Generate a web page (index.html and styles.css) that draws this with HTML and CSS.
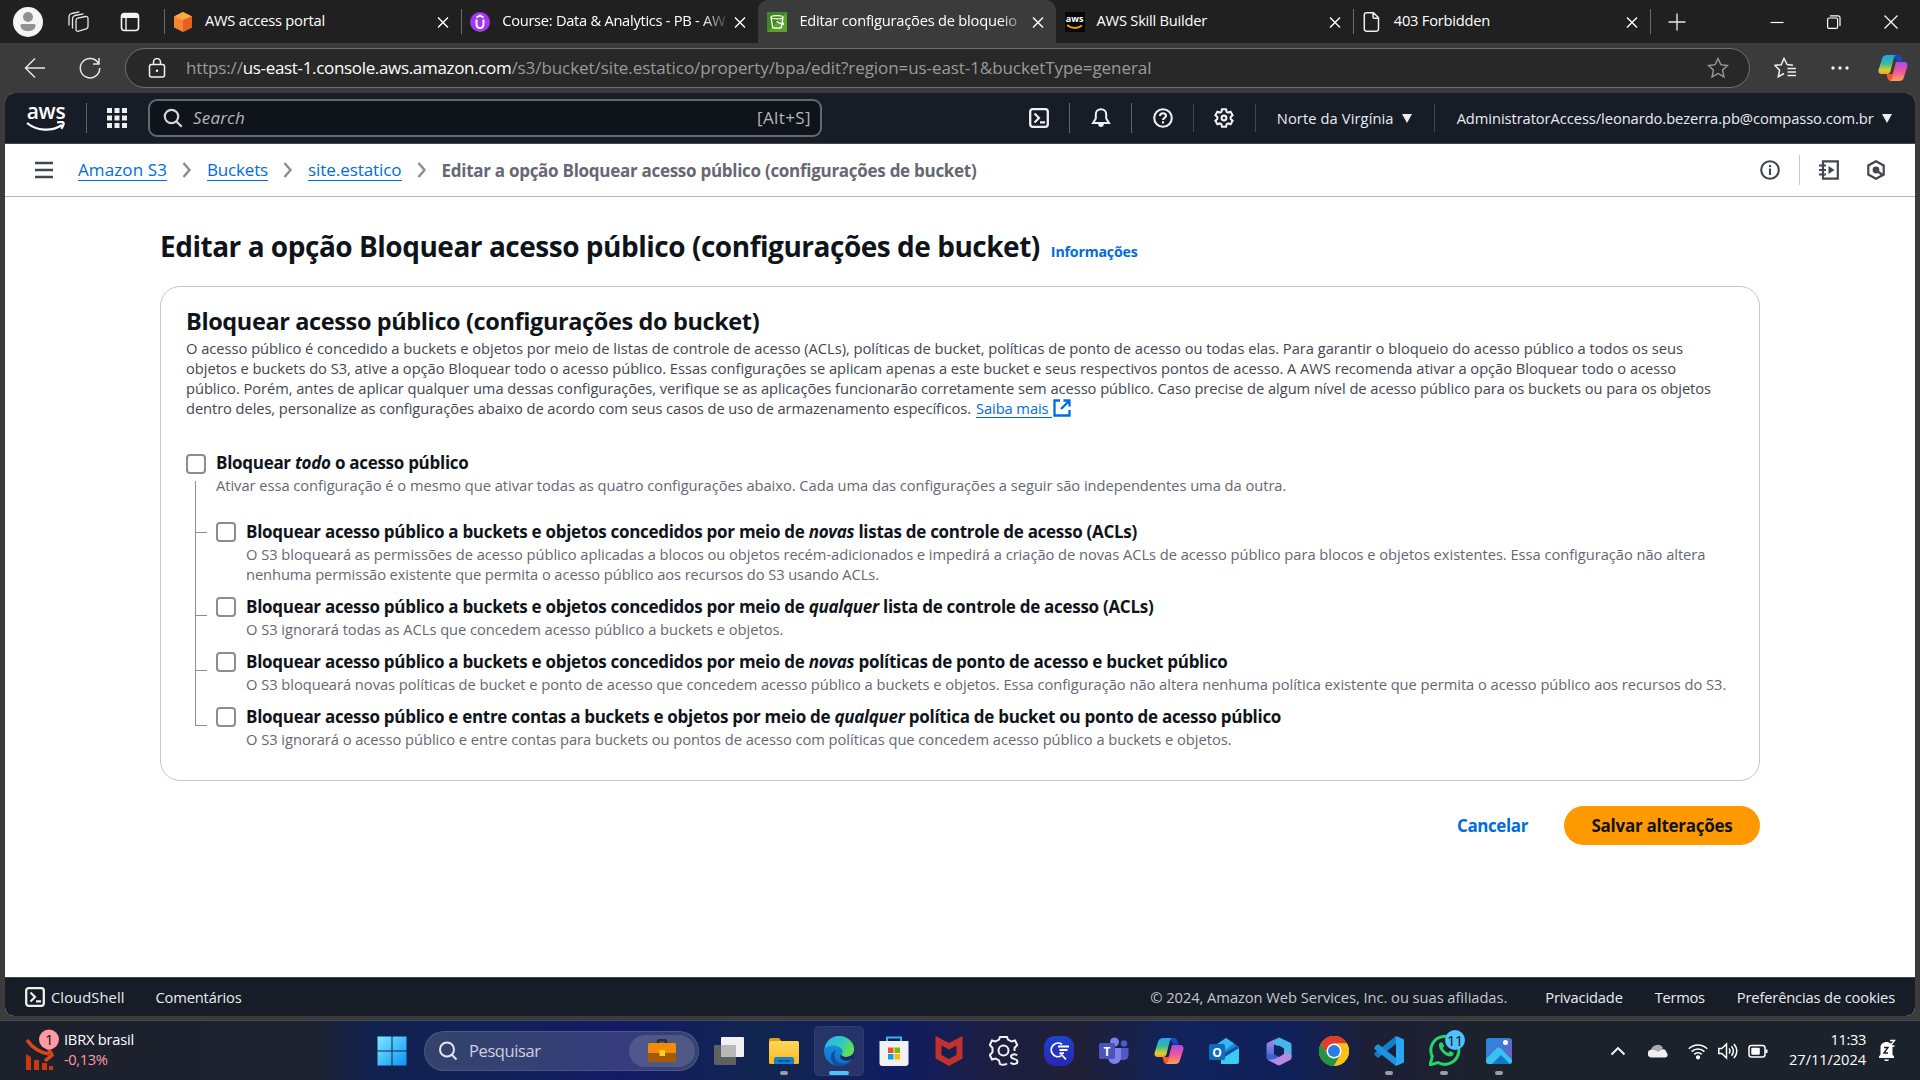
FILE: index.html
```html
<!DOCTYPE html>
<html lang="pt-BR">
<head>
<meta charset="utf-8">
<title>Editar configurações de bloqueio</title>
<link rel="stylesheet" href="styles.css">
</head>
<body>
<svg class="defs" aria-hidden="true">
  <defs>
    <linearGradient id="cpA" x1="0" y1="0" x2="0" y2="1"><stop offset="0" stop-color="#1fa4ee"/><stop offset=".45" stop-color="#3cba9c"/><stop offset=".8" stop-color="#d7d02a"/><stop offset="1" stop-color="#f3a51c"/></linearGradient>
    <linearGradient id="cpB" x1="0" y1="0" x2="0" y2="1"><stop offset="0" stop-color="#a64df0"/><stop offset=".5" stop-color="#f0559a"/><stop offset="1" stop-color="#fba35a"/></linearGradient>
    <linearGradient id="edA" x1="0" y1="0" x2="1" y2=".4"><stop offset="0" stop-color="#28b6ea"/><stop offset=".6" stop-color="#2fc8c0"/><stop offset="1" stop-color="#63e04e"/></linearGradient>
    <linearGradient id="edB" x1="0" y1="0" x2="0" y2="1"><stop offset="0" stop-color="#1b9ae0"/><stop offset="1" stop-color="#0d6fc4"/></linearGradient>
    <linearGradient id="wn" x1="0" y1="0" x2="1" y2="1"><stop offset="0" stop-color="#7deaff"/><stop offset="1" stop-color="#0a93f7"/></linearGradient>
    <linearGradient id="fd" x1="0" y1="0" x2="0" y2="1"><stop offset="0" stop-color="#ffd75e"/><stop offset="1" stop-color="#fcb91c"/></linearGradient>
    <linearGradient id="qb" x1="0" y1="0" x2="0" y2="1"><stop offset="0" stop-color="#1b44cf"/><stop offset="1" stop-color="#2b25b3"/></linearGradient>
    <linearGradient id="ph" x1="0" y1="0" x2="1" y2="1"><stop offset="0" stop-color="#1c8fe0"/><stop offset="1" stop-color="#7a57c0"/></linearGradient>
    <linearGradient id="mA" x1="0" y1="0" x2="0" y2="1"><stop offset="0" stop-color="#b98ae6"/><stop offset="1" stop-color="#3f6fd8"/></linearGradient>
    <symbol id="copilot" viewBox="0 0 30 30">
      <path d="M15 2h5c2 0 3 1 3.500 3l1 3.500h-5z" fill="#1648c8"/>
      <path d="M9 2h9c-1.500 1-2 2-2.500 4l-3 12c-.5 2-1.500 3-3.500 3H4c-3 0-4-2-3.200-5L4 6c.8-3 2.500-4 5-4z" fill="url(#cpA)"/>
      <path d="M8.500 21h5.500l1-1 3-11 3 0-3.500 14c-1 3.500-2 5-4.500 5-2 0-3-1-3.500-3z" fill="#f4562e"/>
      <path d="M21 28h-9c1.500-1 2-2 2.500-4l3-12c.5-2 1.500-3 3.500-3h5c3 0 4 2 3.200 5L26 24c-.8 3-2.500 4-5 4z" fill="url(#cpB)"/>
    </symbol>
    <symbol id="x" viewBox="0 0 20 20"><path d="M5 5.500l10 10M15 5.500l-10 10" stroke="#fff" stroke-width="1.400" fill="none"/></symbol>
    <symbol id="shell" viewBox="0 0 20 20"><rect x="1.200" y="1.200" width="17.600" height="17.600" rx="2.500" fill="none" stroke="#f0f0f2" stroke-width="2.300"/><path d="M5.500 5.500l4.500 4.500-4.500 4.500M11 14.300h5" fill="none" stroke="#f0f0f2" stroke-width="2.200"/></symbol>
    <symbol id="chev" viewBox="0 0 10 18"><path d="M1.500 2l6 7-6 7" fill="none" stroke="#8c8c94" stroke-width="2.400"/></symbol>
  </defs>
</svg>

<header class="tabbar">
  <div class="tabtools">
    <svg class="i30" viewBox="0 0 30 30"><circle cx="15" cy="15" r="15" fill="#f5f5f5"/><circle cx="15" cy="10" r="5" fill="#919191"/><path d="M7.500 18.500c0-1 .5-1.500 1.500-1.500h12c1 0 1.500.5 1.500 1.500 0 3.500-3 5.500-7.500 5.500s-7.500-2-7.500-5.500z" fill="#919191"/></svg>
    <svg class="i22" viewBox="0 0 22 22" fill="none" stroke="#e8e8e8" stroke-width="1.300"><path d="M9 9.500c0-1.300.6-2 1.800-2.300l7.700-1.700c1.500-.3 2.500.4 2.500 2v8c0 1.300-.6 2-1.800 2.400l-7.700 2.300c-1.500.4-2.500-.4-2.500-1.900zM5.500 17.500V8c0-2 .8-3 2.500-3.500L16.500 2.800M2 14.500V6c0-2 .8-3 2.500-3.500L12.500.8"/></svg>
    <svg class="i20" viewBox="0 0 20 20"><rect x="1.500" y="1.500" width="17" height="17" rx="3" fill="none" stroke="#f5f5f5" stroke-width="1.600"/><path d="M1.500 6V4a2.500 2.500 0 0 1 2.500-2.500h12A2.500 2.500 0 0 1 18.500 4v2z" fill="#f5f5f5"/><path d="M6 6v12" stroke="#f5f5f5" stroke-width="1.400"/></svg>
  </div>
  <nav class="tabs">
    <div class="tab">
      <svg class="i20" viewBox="0 0 20 20"><path d="M10 0l9 4.500v11L10 20l-9-4.500v-11z" fill="#f58536"/><path d="M10 0l9 4.500L10 8 1 4.500z" fill="#fbaa3c"/><path d="M10 8l9-3.500v11L10 20z" fill="#e8601c"/></svg>
      <span class="tab-title">AWS access portal</span><svg class="i20"><use href="#x"/></svg>
    </div>
    <div class="tab">
      <svg class="i20" viewBox="0 0 20 20"><circle cx="10" cy="10" r="10" fill="#a435f0"/><path d="M6.500 5.500L10 3.500l3.500 2M6.500 7.500v4.500c0 2.500 1.300 4 3.500 4s3.500-1.500 3.500-4V7.500" fill="none" stroke="#fff" stroke-width="2"/></svg>
      <span class="tab-title fade tight">Course: Data &amp; Analytics - PB - AW</span><svg class="i20"><use href="#x"/></svg>
    </div>
    <div class="tab active">
      <svg class="i20" viewBox="0 0 20 20"><rect width="20" height="20" fill="#3f8624"/><path d="M0 20L20 0v20z" fill="#5aa22c"/><path d="M4 5.500l1.700 10c.2.700 8.400.7 8.600 0L16 5.500M9.500 9.500l5.500 2.800c2 .5 2-.8.3-2" fill="none" stroke="#fff" stroke-width="1.300"/><ellipse cx="10" cy="5.300" rx="6" ry="1.600" fill="none" stroke="#fff" stroke-width="1.200"/></svg>
      <span class="tab-title fade">Editar configurações de bloqueio</span><svg class="i20"><use href="#x"/></svg>
    </div>
    <div class="tab nosep">
      <span class="awsfav"><b>aws</b><svg viewBox="0 0 16 5"><path d="M0 1c4 3.500 10 4 15 .5" fill="none" stroke="#f90" stroke-width="2"/></svg></span>
      <span class="tab-title">AWS Skill Builder</span><svg class="i20"><use href="#x"/></svg>
    </div>
    <div class="tab">
      <svg class="i20" viewBox="0 0 20 20" fill="none" stroke="#eee" stroke-width="1.500"><path d="M4.500.8h7l5 5V17a2.200 2.200 0 0 1-2.200 2.200H4.500A2.200 2.200 0 0 1 2.300 17V3A2.200 2.200 0 0 1 4.500.8M11 .8v4a1.500 1.500 0 0 0 1.500 1.500h4"/></svg>
      <span class="tab-title">403 Forbidden</span><svg class="i20"><use href="#x"/></svg>
    </div>
  </nav>
  <div class="newtab"><svg class="i20" viewBox="0 0 20 20"><path d="M10 1.500v17M1.500 10h17" stroke="#e6e6e6" stroke-width="1.400"/></svg></div>
  <div class="wincontrols">
    <svg class="i16" viewBox="0 0 16 16"><path d="M1.500 8.500h13" stroke="#fff" stroke-width="1.200"/></svg>
    <svg class="i16" viewBox="0 0 16 16" fill="none" stroke="#fff" stroke-width="1.200"><rect x="1.600" y="4" width="10" height="10.400" rx="1.500"/><path d="M4 1.800h8a2 2 0 0 1 2 2V12"/></svg>
    <svg class="i16" viewBox="0 0 16 16"><path d="M1.500 1.500l13 13M14.500 1.500l-13 13" stroke="#fff" stroke-width="1.200"/></svg>
  </div>
</header>

<div class="toolbar">
  <svg class="i24" viewBox="0 0 24 24"><path d="M22 12H3M12 2.500L2.500 12l9.500 9.500" fill="none" stroke="#e6e6e6" stroke-width="1.500"/></svg>
  <svg class="i24" viewBox="0 0 24 24"><path d="M20.500 7.500A9.700 9.700 0 1 0 21.700 12M21 2v6h-6" fill="none" stroke="#e6e6e6" stroke-width="1.500"/></svg>
  <div class="url">
    <svg class="i20" viewBox="0 0 20 20" fill="none" stroke="#f0f0f0" stroke-width="1.500"><rect x="2.500" y="6.500" width="15" height="12.500" rx="2"/><path d="M6.500 6.500V4a3.500 3.500 0 0 1 7 0v2.500"/><circle cx="10" cy="12.700" r="1.200" fill="#fff" stroke="none"/></svg>
    <span class="url-text"><span class="scheme">https://</span><b>us-east-1.console.aws.amazon.com</b><span class="path">/s3/bucket/site.estatico/property/bpa/edit?region=us-east-1&amp;bucketType=general</span></span>
    <svg class="i22" viewBox="0 0 22 22"><path d="M11 1.500l2.900 6.200 6.600.8-4.900 4.600 1.300 6.700L11 16.500l-5.900 3.300 1.300-6.700L1.500 8.500l6.600-.8z" fill="none" stroke="#9b9b9b" stroke-width="1.400"/></svg>
  </div>
  <div class="tb-right">
    <svg class="i22" viewBox="0 0 22 22" fill="none" stroke="#f0f0f0" stroke-width="1.500"><path d="M19 8.300l-5.800-.8L10 1.500 7.200 7.700l-6.200.8 4.600 4.600-1.300 6.700L10 16.500M13.500 11.500H22M13.500 15H22M13.500 18.500H22"/></svg>
    <svg class="i22" viewBox="0 0 22 22" fill="#f0f0f0"><circle cx="4" cy="11" r="1.700"/><circle cx="11" cy="11" r="1.700"/><circle cx="18" cy="11" r="1.700"/></svg>
    <svg class="i30"><use href="#copilot"/></svg>
  </div>
</div>

<div class="viewport">
  <header class="awsnav">
    <div class="logo"><span>aws</span><svg viewBox="0 0 40 12"><path d="M1 2c10 8 24 9 35 2M31 1.500c3-.7 6-.5 6.500.3s-.3 3.700-2.300 6" fill="none" stroke="#fff" stroke-width="2.200"/></svg></div>
    <i class="vsep tall"></i>
    <svg class="i20 apps" viewBox="0 0 20 20" fill="#f0f0f2"><path d="M0 0h5v5H0zM7.500 0h5v5h-5zM15 0h5v5h-5zM0 7.500h5v5H0zM7.500 7.500h5v5h-5zM15 7.500h5v5h-5zM0 15h5v5H0zM7.500 15h5v5h-5zM15 15h5v5h-5z"/></svg>
    <div class="search">
      <svg class="i20" viewBox="0 0 20 20" fill="none" stroke="#d5d5da" stroke-width="2.200"><circle cx="8.500" cy="8.500" r="6.700"/><path d="M13.200 13.200l5.500 5.500"/></svg>
      <i class="ph">Search</i><span class="kbd">[Alt+S]</span>
    </div>
    <div class="navicons">
      <svg class="i20"><use href="#shell"/></svg><i class="vsep tall"></i>
      <svg class="i20" viewBox="0 0 20 20" fill="none" stroke="#f0f0f2" stroke-width="2"><path d="M10 1.200c-3.300 0-5.200 2.300-5.200 5.200v4L2 15h16l-2.800-4.600v-4c0-2.900-1.900-5.200-5.200-5.200z"/><path d="M7 16c.3 2 1.400 3 3 3s2.700-1 3-3z" fill="#f0f0f2" stroke="none"/></svg><i class="vsep tall"></i>
      <svg class="i20" viewBox="0 0 20 20" fill="none" stroke="#f0f0f2" stroke-width="2.100"><circle cx="10" cy="10" r="8.800"/><path d="M7 8c0-1.800 1.300-2.800 3-2.800s3 1 3 2.600c0 2-3 2-3 4.200M10 13.300v2.200"/></svg><i class="vsep"></i>
      <svg class="i20" viewBox="0 0 20 20" fill="none" stroke="#f0f0f2" stroke-width="2.100"><path d="M8 1.200h4l.6 2.600 1.500.8 2.500-.8 2 3.400-1.900 1.800v2l1.900 1.800-2 3.400-2.500-.8-1.500.8-.6 2.600H8l-.6-2.600-1.500-.8-2.500.8-2-3.400L3.300 11V9L1.400 7.200l2-3.400 2.500.8 1.500-.8z"/><circle cx="10" cy="10" r="2.400"/></svg><i class="vsep"></i>
    </div>
    <span class="region"><span>Norte da Virgínia</span><i class="caret"></i></span>
    <i class="vsep"></i>
    <span class="account"><span>AdministratorAccess/leonardo.bezerra.pb@compasso.com.br</span><i class="caret"></i></span>
  </header>

  <div class="crumbbar">
    <svg class="i18" viewBox="0 0 18 18"><path d="M0 2h18M0 9h18M0 16h18" stroke="#424650" stroke-width="2.300"/></svg>
    <nav class="crumbs">
      <a class="c1">Amazon S3</a><svg><use href="#chev"/></svg>
      <a class="c2">Buckets</a><svg><use href="#chev"/></svg>
      <a class="c3">site.estatico</a><svg><use href="#chev"/></svg>
      <b>Editar a opção Bloquear acesso público (configurações de bucket)</b>
    </nav>
    <div class="crumbicons">
      <svg class="i20" viewBox="0 0 20 20" fill="none" stroke="#424650" stroke-width="2.100"><circle cx="10" cy="10" r="8.800"/><path d="M10 8.500V15M10 5v2.200"/></svg>
      <i class="lsep"></i>
      <svg class="i20 book" viewBox="0 0 20 20" fill="none" stroke="#424650" stroke-width="2.200"><path d="M4 1.300h14.800v17.400H4z"/><path d="M0 5.500h7M0 10h7M0 14.500h7"/><path d="M9.500 6l6 4-6 4z" fill="#424650" stroke="none"/></svg>
      <svg class="i20" viewBox="0 0 20 20" fill="none" stroke="#424650" stroke-width="2.200"><path d="M10 1.200l7.700 4.300v9L10 18.800l-7.700-4.300v-9z"/><circle cx="10" cy="10" r="3.400" fill="#424650" stroke="none"/><path d="M11 11l6.500 4.500"/></svg>
    </div>
  </div>

  <main class="content">
    <h1><span>Editar a opção Bloquear acesso público (configurações de bucket)</span><a class="info">Informações</a></h1>
    <section class="card">
      <h2>Bloquear acesso público (configurações do bucket)</h2>
      <div class="desc">
        <div>O acesso público é concedido a buckets e objetos por meio de listas de controle de acesso (ACLs), políticas de bucket, políticas de ponto de acesso ou todas elas. Para garantir o bloqueio do acesso público a todos os seus</div>
        <div>objetos e buckets do S3, ative a opção Bloquear todo o acesso público. Essas configurações se aplicam apenas a este bucket e seus respectivos pontos de acesso. A AWS recomenda ativar a opção Bloquear todo o acesso</div>
        <div>público. Porém, antes de aplicar qualquer uma dessas configurações, verifique se as aplicações funcionarão corretamente sem acesso público. Caso precise de algum nível de acesso público para os buckets ou para os objetos</div>
        <div><span>dentro deles, personalize as configurações abaixo de acordo com seus casos de uso de armazenamento específicos.</span><a class="more">Saiba mais </a><svg class="ext" viewBox="0 0 18 18" fill="none" stroke="#006ce0" stroke-width="2.300"><path d="M7 1.500H1.500v15h15V11M10.500 1.500h6v6M16.500 1.500L8 10"/></svg></div>
      </div>
      <div class="opt root">
        <span class="box"></span>
        <div><div class="ot">Bloquear <em>todo</em> o acesso público</div>
        <div class="od">Ativar essa configuração é o mesmo que ativar todas as quatro configurações abaixo. Cada uma das configurações a seguir são independentes uma da outra.</div></div>
      </div>
      <div class="tree">
        <div class="opt first"><span class="box"></span><div><div class="ot">Bloquear acesso público a buckets e objetos concedidos por meio de <em>novas</em> listas de controle de acesso (ACLs)</div>
          <div class="od">O S3 bloqueará as permissões de acesso público aplicadas a blocos ou objetos recém-adicionados e impedirá a criação de novas ACLs de acesso público para blocos e objetos existentes. Essa configuração não altera</div><div class="od narrow">nenhuma permissão existente que permita o acesso público aos recursos do S3 usando ACLs.</div></div></div>
        <div class="opt"><span class="box"></span><div><div class="ot">Bloquear acesso público a buckets e objetos concedidos por meio de <em>qualquer</em> lista de controle de acesso (ACLs)</div>
          <div class="od">O S3 ignorará todas as ACLs que concedem acesso público a buckets e objetos.</div></div></div>
        <div class="opt"><span class="box"></span><div><div class="ot">Bloquear acesso público a buckets e objetos concedidos por meio de <em>novas</em> políticas de ponto de acesso e bucket público</div>
          <div class="od">O S3 bloqueará novas políticas de bucket e ponto de acesso que concedem acesso público a buckets e objetos. Essa configuração não altera nenhuma política existente que permita o acesso público aos recursos do S3.</div></div></div>
        <div class="opt"><span class="box"></span><div><div class="ot">Bloquear acesso público e entre contas a buckets e objetos por meio de <em>qualquer</em> política de bucket ou ponto de acesso público</div>
          <div class="od">O S3 ignorará o acesso público e entre contas para buckets ou pontos de acesso com políticas que concedem acesso público a buckets e objetos.</div></div></div>
      </div>
    </section>
    <div class="actions"><a>Cancelar</a><button>Salvar alterações</button></div>
  </main>

  <footer class="awsfoot">
    <svg class="i20"><use href="#shell"/></svg><span class="f1">CloudShell</span><span class="f2">Comentários</span>
    <span class="copy">© 2024, Amazon Web Services, Inc. ou suas afiliadas.</span><span class="f3">Privacidade</span><span class="f4">Termos</span><span class="f5">Preferências de cookies</span>
  </footer>
</div>

<footer class="taskbar">
  <div class="widget">
    <svg class="wicon" viewBox="0 0 34 44"><g fill="#c8390f"><path d="M1 27l5 3v13H1zM9 33h5v10H9zM17 36h5v7h-5zM24 39h4v4h-4z"/></g><path d="M2 13c4 6 10 12 22 14M20 34l7-6-4-7" fill="none" stroke="#d8481c" stroke-width="3.500"/><circle cx="24" cy="12.500" r="10" fill="#ff99a4"/><text x="24" y="18" text-anchor="middle" class="badge">1</text></svg>
    <div class="wtext"><span class="idx">IBRX brasil</span><span class="neg">-0,13%</span></div>
  </div>
  <div class="apps-row">
    <span class="app"><svg viewBox="0 0 30 30"><path d="M0.500 0.500h14v14h-14zM15.500.5h14v14h-14zM.5 15.500h14v14h-14zM15.500 15.500h14v14h-14z" fill="url(#wn)"/></svg></span>
    <div class="wsearch">
      <svg class="i20" viewBox="0 0 20 20" fill="none" stroke="#e4e6ee" stroke-width="2"><circle cx="9" cy="8.500" r="7"/><path d="M13.500 13.500l5 5"/></svg>
      <span>Pesquisar</span>
      <div class="brief"><svg viewBox="0 0 28 24"><path d="M10 4V2.500C10 1 11 1 14 1s4 0 4 1.500V4" fill="none" stroke="#2c2c30" stroke-width="2.500"/><rect y="4" width="28" height="19" rx="1.500" fill="#a55a07"/><path d="M0 5.500A1.500 1.500 0 0 1 1.500 4h25A1.500 1.500 0 0 1 28 5.500V14H0z" fill="#f08c08"/><rect x="11.500" y="11" width="5.500" height="6" fill="#ffd21c"/></svg></div>
    </div>
    <span class="app"><svg viewBox="0 0 30 30"><rect y="9" width="22" height="20" rx="1" fill="#5f6062"/><rect x="7" y="1" width="23" height="20" rx="1" fill="#f0f0f0"/><rect x="7" y="9" width="15" height="12" fill="#b8b8b8"/></svg></span>
    <span class="app run"><svg viewBox="0 0 30 30"><path d="M0 4a2 2 0 0 1 2-2h8l3 4H0z" fill="#e09b10"/><rect y="5" width="30" height="23" rx="1.500" fill="url(#fd)"/><path d="M5 28v-5a2 2 0 0 1 2-2h16a2 2 0 0 1 2 2v5z" fill="#1380d0"/><path d="M9 25h12" stroke="#0a4f94" stroke-width="1.500"/></svg></span>
    <span class="app cur"><svg viewBox="0 0 30 30"><circle cx="15" cy="15" r="15" fill="url(#edB)"/><path d="M1 12C2 5 8 0 15 0c8.500 0 15 6 15 13 0 5-3.500 8-8 8-3.500 0-5-1.500-4.500-3 1.500-1.500 1.500-3 .5-4.500C15 9 6 8 1 12z" fill="url(#edA)"/><path d="M12 14c-3 4-2 11 4 13 4 1.300 8 .5 11-2-3 3.500-7 5-12 5-6-1-9-6-8-10.500.5-2.500 2.500-5 5-5.500z" fill="#10509c"/><path d="M17.500 18c-.5 1.700 1 3 4.500 3 4 0 7.500-2.500 8.500-6l0 8-3.500.5c-3 1.500-6 1.500-8 .5-3-1.500-3.500-4-1.500-6z" fill="#1d2a62"/></svg></span>
    <span class="app"><svg viewBox="0 0 30 30"><path d="M8 6V1.500h14V6" fill="none" stroke="#35b4f0" stroke-width="2"/><path d="M.5 5h29v22a3 3 0 0 1-3 3h-23a3 3 0 0 1-3-3z" fill="#f2f2f4"/><path d="M9 11.500h5.500V17H9z" fill="#f25022"/><path d="M15.500 11.500H21V17h-5.500z" fill="#7fba00"/><path d="M9 18h5.500v5.500H9z" fill="#00a4ef"/><path d="M15.500 18H21v5.500h-5.500z" fill="#ffb900"/></svg></span>
    <span class="app"><svg viewBox="0 0 30 30"><path d="M1.500 0L15 7 28.500 0v22.500L15 30 1.500 22.500zM7.500 9.500V19l7.500 4 7.500-4V9.500L15 13.500z" fill="#c4302e" fill-rule="evenodd"/></svg></span>
    <span class="app"><svg viewBox="0 0 30 30" fill="none" stroke="#f2f2f4" stroke-width="2"><path d="M18 27.500c-1.500 1.500-5.500 1.500-7 .5l-1-3.500-3.500-2-3.500 1-2.200-4.500 2.700-3v-4L.8 9 3 4.500l3.500 1L10 3.500l1-2.500h7l1 2.500 3.500 2 3.500-1L28.200 9l-2.700 3v3"/><circle cx="14.500" cy="14.500" r="5"/><path d="M28 19.500c-1-1.500-6-1.800-6 1 0 3 6.500 1.800 6.500 5 0 3-5.500 3.200-7 1"/></svg></span>
    <span class="app"><svg viewBox="0 0 30 30"><rect width="30" height="30" rx="11" fill="url(#qb)"/><path d="M18 8.300a6.800 6.800 0 1 0-1 11.700M16.500 17.500l5.500 6M14 10.500h11M15.500 14h8M15.500 17.200h4.500" fill="none" stroke="#fff" stroke-width="1.800"/></svg></span>
    <span class="app"><svg viewBox="0 0 30 30"><circle cx="15.500" cy="6" r="4.500" fill="#7b83eb"/><circle cx="25" cy="7.500" r="3.200" fill="#5059c9"/><path d="M21 12h8.500v7c0 3-2 5-5 5H21z" fill="#5059c9"/><path d="M9 12h13v9c0 4-3 7-6.500 7S9 25 9 21z" fill="#7b83eb"/><rect y="7" width="16" height="16" rx="1.500" fill="#4b53bc"/><text x="8" y="19.500" text-anchor="middle" class="letter">T</text></svg></span>
    <span class="app"><svg><use href="#copilot"/></svg></span>
    <span class="app"><svg viewBox="0 0 30 30"><path d="M5 12L17 2l13 9v6H5z" fill="#1a86d8"/><path d="M8 8l9-6 8 5.500L12 17z" fill="#35b8f1"/><path d="M12 28V21l18-9v14a2 2 0 0 1-2 2z" fill="#3ccbf4"/><path d="M28 10l2 2-16 10-2-3z" fill="#0a4fa5"/><rect y="8" width="16" height="16" rx="1.500" fill="#0f6cbd"/><text x="8" y="20.500" text-anchor="middle" class="letter">O</text></svg></span>
    <span class="app"><svg viewBox="0 0 30 30"><path d="M15 1.500l-5 3v16L2.500 18V9c0-1 .5-1.800 1.500-2.500z" fill="url(#mA)"/><path d="M2.500 17l8 2.500v-5l4.500-5 5 2v9L12 28 4 24c-1-.5-1.500-1.500-1.500-2.500z" fill="#3f5fcf"/><path d="M10 4.500l5-3 11 5c1 .5 1.500 1.500 1.500 2.500v12l-8-4v-5L10 8.500z" fill="#45b8ea"/><path d="M27.500 19v2.500c0 1-.5 2-1.500 2.500l-9.500 5c-1 .5-2 .5-3 0L4 24l7-1 5-3 4-5z" fill="#b48be0"/><path d="M15 9.500l5 3v5.500L15 21l-5-3v-5.500z" fill="#12225a"/></svg></span>
    <span class="app"><svg viewBox="0 0 30 30"><circle cx="15" cy="15" r="15" fill="#fbc116"/><path d="M2 7.500a15 15 0 0 1 26 0H15L8.500 18.700z" fill="#e33b2e"/><path d="M2 7.500A15 15 0 0 0 15 30l6.500-11.300H8.500z" fill="#229342"/><path d="M21.500 18.700L15 30a15 15 0 0 0 13-22.500H15z" fill="#fbc116"/><circle cx="15" cy="15" r="7.500" fill="#fff"/><circle cx="15" cy="15" r="6" fill="#2b7bea"/></svg></span>
    <span class="app run"><svg viewBox="0 0 30 30"><path d="M22 0l8 3.500v23L22 30z" fill="#29a7f2"/><path d="M22 0v8L4 22l-3.500-3v-2z" fill="#0f80cc"/><path d="M22 30v-8L4 8 .5 11v2z" fill="#1e92de"/></svg></span>
    <span class="app run"><svg class="wide" viewBox="0 0 36 36"><path d="M1 35l2.300-8.500A14 14 0 1 1 9 32.500z" fill="none" stroke="#25d366" stroke-width="3"/><path d="M10 14c1-2 3-2.500 3.700-1l1.500 3-1.500 2c1 2 3 4 5.500 5l1.800-2 3.500 1.800c.8.700-.5 3.500-3 3.700C16.500 26.500 9 20 10 14z" fill="#25d366"/><circle cx="26" cy="10" r="10" fill="#4cc2ff"/><text x="25.700" y="15.500" text-anchor="middle" class="badge">11</text></svg></span>
    <span class="app run"><svg viewBox="0 0 30 30"><rect x="2" y="2" width="26" height="26" rx="3" fill="url(#ph)"/><path d="M2 23l10.500-10.500c1.500-1.500 3-1.500 4.500 0L28 24v1a3 3 0 0 1-3 3H5a3 3 0 0 1-3-3z" fill="#36c3f2"/><path d="M8 28l9-9 9 9z" fill="#0f78c8"/><circle cx="21.500" cy="6.500" r="2.500" fill="#fff"/></svg></span>
  </div>
  <div class="tray">
    <svg class="i16" viewBox="0 0 16 16"><path d="M1.500 11.500L8 5l6.500 6.500" fill="none" stroke="#fff" stroke-width="1.800"/></svg>
    <svg class="i20" viewBox="0 0 20 20"><path d="M3 11a6.500 6.500 0 0 1 12-4l-6 7z" fill="#a9abb0"/><path d="M4 16.500a4 4 0 1 1 1.500-7.500c2 .3 4 1.500 5 2 1.500-2 4-3.500 6-2.500 1.800 1 1.500 2.500 3 4.500.5 2-.5 3.500-2.500 3.500z" fill="#f0f0f2"/></svg>
    <svg class="i20 wifi" viewBox="0 0 20 20" fill="none" stroke="#fff" stroke-width="1.500"><path d="M.8 7.800a13 13 0 0 1 18.400 0M3.600 10.600a9 9 0 0 1 12.800 0M6.300 13.400a5.200 5.200 0 0 1 7.400 0"/><circle cx="10" cy="16.300" r="1.400" fill="#fff"/></svg>
    <svg class="i20" viewBox="0 0 20 20" fill="none" stroke="#fff" stroke-width="1.500"><path d="M.8 7.500h3L8.500 3v14l-4.700-4.500h-3zM11 7.500c1.200 1.500 1.200 3.500 0 5M13.500 5.300c2.300 2.800 2.300 6.600 0 9.400M16 3c3.500 4.300 3.500 9.700 0 14"/></svg>
    <svg class="i20" viewBox="0 0 20 20"><rect x="1" y="4.500" width="16" height="11.500" rx="2.500" fill="none" stroke="#fff" stroke-width="1.500"/><rect x="3.300" y="6.800" width="8.500" height="7" rx="1" fill="#fff"/><path d="M18.500 8.500v3.500" stroke="#fff" stroke-width="2"/></svg>
    <div class="clock"><span class="hour">11:33</span><span class="date">27/11/2024</span></div>
    <svg class="bell" viewBox="0 0 18 24"><path d="M1 19h15v-1.500l-1.500-2V8c0-2.500-2.500-5-6-5s-6 2.500-6 5v7.500L1 17.500zM6 20.500h5c-.3 2-4.700 2-5 0z" fill="#fff"/><path d="M6 8.500h4l-4 5.500h4" fill="none" stroke="#1c212b" stroke-width="1.400"/><path d="M12 1.500h4.500L12 7h4.500" fill="none" stroke="#fff" stroke-width="1.400"/></svg>
  </div>
</footer>
</body>
</html>
```
FILE: styles.css
```css
* { box-sizing: border-box; }
html, body { margin: 0; height: 100%; overflow: hidden; }
body {
  display: flex; flex-direction: column; background: #3b3b3b;
  font-family: "Open Sans", "Noto Sans", sans-serif; font-size: 14.7px; white-space: nowrap;
}
svg { display: block; flex: none; }
.defs { position: absolute; width: 0; height: 0; }
.i16 { width: 16px; height: 16px; }
.i18 { width: 18px; height: 18px; }
.i20 { width: 20px; height: 20px; }
.i22 { width: 22px; height: 22px; }
.i24 { width: 24px; height: 24px; }
.i30 { width: 30px; height: 30px; }

/* browser tab strip */
.tabbar { height: 43px; flex: none; display: flex; background: #202020; color: #fff; }
.tabtools { width: 164px; display: flex; align-items: center; padding-left: 13px; }
.tabtools svg:nth-child(2) { margin-left: 24px; }
.tabtools svg:nth-child(3) { margin-left: 31px; }
.tabs { display: flex; }
.tab { width: 297.2px; display: flex; align-items: center; padding: 0 8px 0 9px; position: relative; }
.tab::before { content: ""; position: absolute; left: 0; top: 9px; width: 1px; height: 25px; background: #6a6a6a; }
.tab.active::before, .tab.nosep::before { display: none; }
.tab.active { background: #3b3b3b; border-radius: 10px 10px 0 0; }
.tab-title { flex: 1; margin-left: 12px; line-height: 20px; padding-bottom: 3px; letter-spacing: -.24px; }
.tab-title.tight { letter-spacing: -.29px; }
.fade { -webkit-mask-image: linear-gradient(90deg, #000 88%, transparent 100%); mask-image: linear-gradient(90deg, #000 88%, transparent 100%); }
.awsfav { width: 20px; height: 20px; background: #060708; color: #fff; display: flex; flex-direction: column; align-items: center; }
.awsfav b { font-size: 9px; line-height: 11px; margin-top: 1px; }
.awsfav svg { width: 16px; height: 5px; }
.newtab { display: flex; align-items: center; padding-left: 16px; border-left: 1px solid #6a6a6a; margin: 9px 0; }
.wincontrols { margin-left: auto; display: flex; align-items: center; gap: 41px; padding-right: 21px; }

/* browser address bar */
.toolbar { height: 50px; flex: none; display: flex; align-items: center; padding-left: 23px; }
.toolbar > svg + svg { margin-left: 31px; }
.url { width: 1625px; height: 40px; margin-left: 23px; border: 1px solid #707070; border-radius: 20px; background: #282828; display: flex; align-items: center; padding: 0 20px 0 21px; }
.url-text { flex: 1; margin-left: 19px; font-size: 17px; color: #9b9b9b; line-height: 24px; }
.url-text b { font-weight: 400; color: #fff; letter-spacing: -.33px; }
.scheme { letter-spacing: -.16px; }
.path { letter-spacing: -.072px; }
.tb-right { display: flex; align-items: center; margin-left: 24px; }
.tb-right svg + svg { margin-left: 33px; }
.tb-right svg:last-child { margin-left: 27px; }

/* console page */
.viewport { height: 923px; margin: 0 5px; border-radius: 9px; overflow: hidden; background: #fff; display: flex; flex-direction: column; flex: none; }
.awsnav { height: 51px; flex: none; background: #161d26; border-bottom: 1px solid #424650; display: flex; align-items: center; padding-left: 21px; color: #ebebf0; }
.logo { width: 40px; display: flex; flex-direction: column; }
.logo span { font: 600 21px/17px "Open Sans", sans-serif; text-align: center; color: #fff; letter-spacing: -.3px; }
.logo svg { width: 40px; height: 12px; margin-top: 1px; }
.vsep { width: 1px; height: 28px; background: #424650; flex: none; }
.vsep.tall { height: 30px; background: #5f6570; }
.logo + .vsep { margin-left: 20px; }
.apps { margin-left: 20px; }
.search { width: 674px; height: 38px; margin-left: 21px; border: 2px solid #656871; border-radius: 9px; background: #0f141a; display: flex; align-items: center; padding: 0 9px 0 13px; font-size: 17px; line-height: 22px; color: #b4b4bb; }
.ph { margin-left: 10px; padding-bottom: 1px; letter-spacing: .19px; }
.kbd { margin-left: auto; padding-bottom: 1px; letter-spacing: .39px; }
.navicons { display: flex; align-items: center; margin-left: 207px; gap: 20.4px; }
.region, .account { display: flex; align-items: center; }
.region { margin: 0 22px 0 21px; letter-spacing: .1px; }
.account { margin-left: 22px; letter-spacing: -.065px; }
.caret { border: 5px solid transparent; border-top: 9px solid #ebebf0; border-bottom: 0; margin-left: 8px; }

.crumbbar { height: 53px; flex: none; border-bottom: 1px solid #b4b4bb; display: flex; align-items: center; padding-left: 30px; font-size: 17px; }
.crumbs { display: flex; align-items: center; margin-left: 25px; line-height: 21px; }
.crumbs a { color: #006ce0; border-bottom: 1px solid #006ce0; height: 22px; }
.crumbs svg { width: 10px; height: 20px; margin: 0 15px; }
.crumbs b { color: #656871; letter-spacing: -.28px; }
.c1 { letter-spacing: .11px; }
.c2 { letter-spacing: -.17px; }
.c3 { letter-spacing: -.065px; }
.crumbicons { margin-left: auto; padding-right: 29px; display: flex; align-items: center; }
.lsep { width: 1px; height: 30px; background: #c6c6cd; margin: 0 19px; }
.book { margin-right: 27px; }

.content { flex: 1; padding: 31px 155px 0; }
h1, h2 { margin: 0; color: #0f141a; }
h1 { font-size: 28px; line-height: 37px; height: 37px; display: flex; align-items: baseline; letter-spacing: -.48px; }
a { color: #006ce0; }
.info { font-size: 14.2px; margin-left: 11px; letter-spacing: -.18px; }
.card { margin-top: 21px; height: 495px; border: 1px solid #c6c6cd; border-radius: 20px; padding: 19px 25px; }
h2 { font-size: 23.5px; line-height: 30px; letter-spacing: -.38px; }
.desc { margin-top: 2px; line-height: 20px; color: #424650; letter-spacing: -.021px; }
.desc div { height: 20px; display: flex; }
.desc div:nth-child(2) { letter-spacing: -.034px; }
.desc div:nth-child(3) { letter-spacing: -.052px; }
.desc div:nth-child(4) { letter-spacing: -.079px; }
.more { border-bottom: 1px solid #006ce0; margin-left: 5px; height: 20px; white-space: pre; }
.ext { width: 18px; height: 18px; margin-top: 1px; margin-left: 1px; }
.opt { display: flex; position: relative; margin-bottom: 10px; }
.box { width: 20px; height: 20px; border: 2px solid #8c8c94; border-radius: 4px; margin: 3px 10px 0 0; flex: none; }
.ot { font-size: 17px; font-weight: 700; line-height: 25px; color: #0f141a; letter-spacing: -.287px; }
.od { line-height: 20px; height: 20px; color: #656871; letter-spacing: -.037px; }
.od.narrow { letter-spacing: -.089px; }
.root { margin: 32px 0 24px; }
.root .box { margin-top: 4px; }
.tree { margin-left: 9px; padding-left: 21px; position: relative; }
.tree::before { content: ""; position: absolute; left: 0; top: -38px; width: 1px; height: 244px; background: #8c8c94; }
.tree .opt::before { content: ""; position: absolute; left: -21px; top: 21px; width: 12px; height: 1px; background: #8c8c94; }
.tree .first::before { top: 13px; }
.actions { margin-top: 25px; display: flex; justify-content: flex-end; align-items: center; font-size: 17px; font-weight: 700; letter-spacing: -.4px; }
.actions button { margin-left: 36px; width: 196px; height: 39px; padding: 0 0 1px; border: 0; border-radius: 20px; background: #f90; color: #0f141a; font: inherit; letter-spacing: -.27px; }

.awsfoot { height: 39px; flex: none; background: #161d26; border-top: 1px solid #424650; color: #ebebf0; display: flex; align-items: center; padding: 0 20px; letter-spacing: -.15px; }
.f1 { margin-left: 6px; letter-spacing: .1px; }
.f2 { margin-left: 31px; letter-spacing: -.17px; }
.copy { margin-left: auto; color: #c6c6cd; letter-spacing: -.049px; }
.f3 { margin-left: 38px; }
.f4, .f5 { margin-left: 32px; }
.f4 { letter-spacing: -.3px; }

/* operating system taskbar */
.taskbar { height: 60px; margin-top: 4px; flex: none; border-top: 1px solid #474a52; display: flex; align-items: center; color: #fff;
  background: linear-gradient(90deg, #1c212c 0, #1c222e 310px, #11224f 370px, #11205a 520px, #131b66 620px, #12254f 760px, #101d62 900px, #1c1e42 990px, #1f2036 1080px, #12225a 1170px, #10215a 1290px, #1d1f36 1370px, #1c222c 1480px, #1c222c 100%); }
.widget { width: 367px; display: flex; align-items: center; padding-left: 25px; flex: none; }
.wicon { width: 34px; height: 44px; margin-top: -4px; }
.badge { font: 15px "Open Sans", sans-serif; fill: #111; letter-spacing: -.8px; }
.wtext { display: flex; flex-direction: column; align-items: flex-start; line-height: 20px; margin: -3px 0 0 5px; }
.idx { letter-spacing: -.23px; }
.neg { color: #ff99a4; letter-spacing: -.4px; }
.apps-row { display: flex; gap: 5px; align-items: center; }
.app { width: 50px; height: 50px; border-radius: 5px; display: flex; align-items: center; justify-content: center; position: relative; }
.app svg { width: 30px; height: 30px; }
.app svg.wide { width: 36px; height: 36px; margin: -6px 0 0 6px; }
.app.run::after, .app.cur::after { content: ""; position: absolute; bottom: 1px; left: 21px; width: 8px; height: 4px; border-radius: 2px; background: #9a9ca6; }
.app.cur { background: rgba(255,255,255,.09); box-shadow: inset 0 0 0 1px rgba(255,255,255,.05); }
.app.cur::after { left: 15px; width: 20px; background: #4cc2ff; }
.letter { font: 700 12px "Open Sans", sans-serif; fill: #fff; }
.wsearch { width: 275px; height: 40px; margin: 0 0 0 2px; border-radius: 20px; background: rgba(255,255,255,.15); box-shadow: inset 0 0 0 1px rgba(255,255,255,.12); display: flex; align-items: center; padding: 0 4px 0 14px; font-size: 16.5px; color: #ccd0de; }
.wsearch > span { margin-left: 11px; letter-spacing: -.4px; }
.brief { margin-left: auto; width: 66px; height: 32px; border-radius: 16px; background: rgba(255,255,255,.13); display: flex; align-items: center; justify-content: center; }
.brief svg { width: 28px; height: 24px; }
.tray { margin-left: auto; display: flex; align-items: center; padding-right: 24px; }
.tray .i16 { margin-right: 22px; }
.tray .i20 { margin-right: 10px; }
.tray .i16 + .i20 { margin-right: 20px; }
.clock { width: 88px; display: flex; flex-direction: column; align-items: flex-end; line-height: 20px; margin-top: -3px; }
.hour { letter-spacing: -.4px; }
.date { letter-spacing: -.1px; }
.bell { width: 18px; height: 24px; margin-left: 12px; }
```
